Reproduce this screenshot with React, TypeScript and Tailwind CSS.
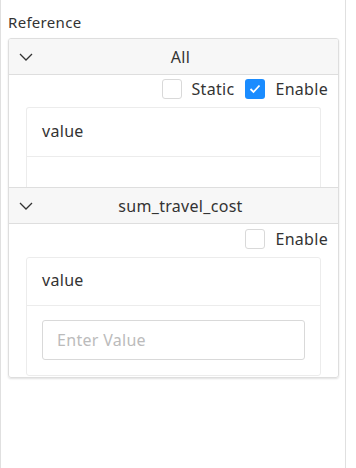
import React from "react";

function Chevron() {
  return (
    <svg width="14" height="8" viewBox="0 0 14 8" fill="none" className="shrink-0">
      <path d="M1 1l6 6 6-6" stroke="#333" strokeWidth="1.3" />
    </svg>
  );
}

function Box({ checked }: { checked?: boolean }) {
  return checked ? (
    <span className="flex h-[20px] w-[20px] items-center justify-center rounded-[3px] bg-[#1a8cff]">
      <svg width="12" height="10" viewBox="0 0 12 10" fill="none">
        <path d="M1.5 5l3 3 6-6.5" stroke="#fff" strokeWidth="1.8" />
      </svg>
    </span>
  ) : (
    <span className="h-[20px] w-[20px] rounded-[3px] border border-[#d9d9d9] bg-white" />
  );
}

function Header({ title }: { title: string }) {
  return (
    <div className="flex h-[36px] items-center border-b border-[#dedede] bg-[#f7f7f7] pl-[10px] pr-[10px]">
      <Chevron />
      <div className="flex-1 text-center text-[16px] text-[#333]">{title}</div>
    </div>
  );
}

export default function App() {
  return (
    <div
      className="h-[468px] w-[356px] bg-white tracking-[0.3px]"
      style={{ fontFamily: '"Noto Sans", "Liberation Sans", sans-serif' }}
    >
      <div className="h-full w-[346px] border-x border-[#e0e0e0] pl-[7px] pr-[6px] pt-[10px]">
        <div className="mb-[4px] text-[15px] leading-[24px] text-[#333]">Reference</div>
        <div className="overflow-hidden rounded-[3px] border border-[#dedede] shadow-[0_1px_2px_rgba(0,0,0,0.12)]">
          <Header title="All" />
          <div className="flex items-center justify-end gap-[10px] pr-[10px] pt-[3px] text-[16px] leading-[22px] text-[#333]">
            <Box />
            <span className="mr-[1px]">Static</span>
            <Box checked />
            <span>Enable</span>
          </div>
          <div className="mx-[17px] mt-[7px] rounded-t-[3px] border-x border-t border-[#ececec]">
            <div className="h-[49px] border-b border-[#ececec] pl-[15px] pt-[11px] text-[16px] text-[#333]">value</div>
            <div className="h-[30px]" />
          </div>
          <div className="border-t border-[#dedede]">
            <Header title="sum_travel_cost" />
          </div>
          <div className="flex items-center justify-end gap-[10px] pr-[10px] pt-[4px] text-[16px] leading-[22px] text-[#333]">
            <Box />
            <span>Enable</span>
          </div>
          <div className="mx-[17px] mb-[1px] mt-[7px] rounded-[3px] border border-[#ececec]">
            <div className="h-[48px] border-b border-[#ececec] pl-[15px] pt-[10px] text-[16px] text-[#333]">value</div>
            <div className="px-[15px] pb-[15px] pt-[14px]">
              <div className="flex h-[40px] items-center rounded-[3px] border border-[#d9d9d9] px-[14px] text-[16px] text-[#bbb]">
                Enter Value
              </div>
            </div>
          </div>
        </div>
      </div>
    </div>
  );
}
